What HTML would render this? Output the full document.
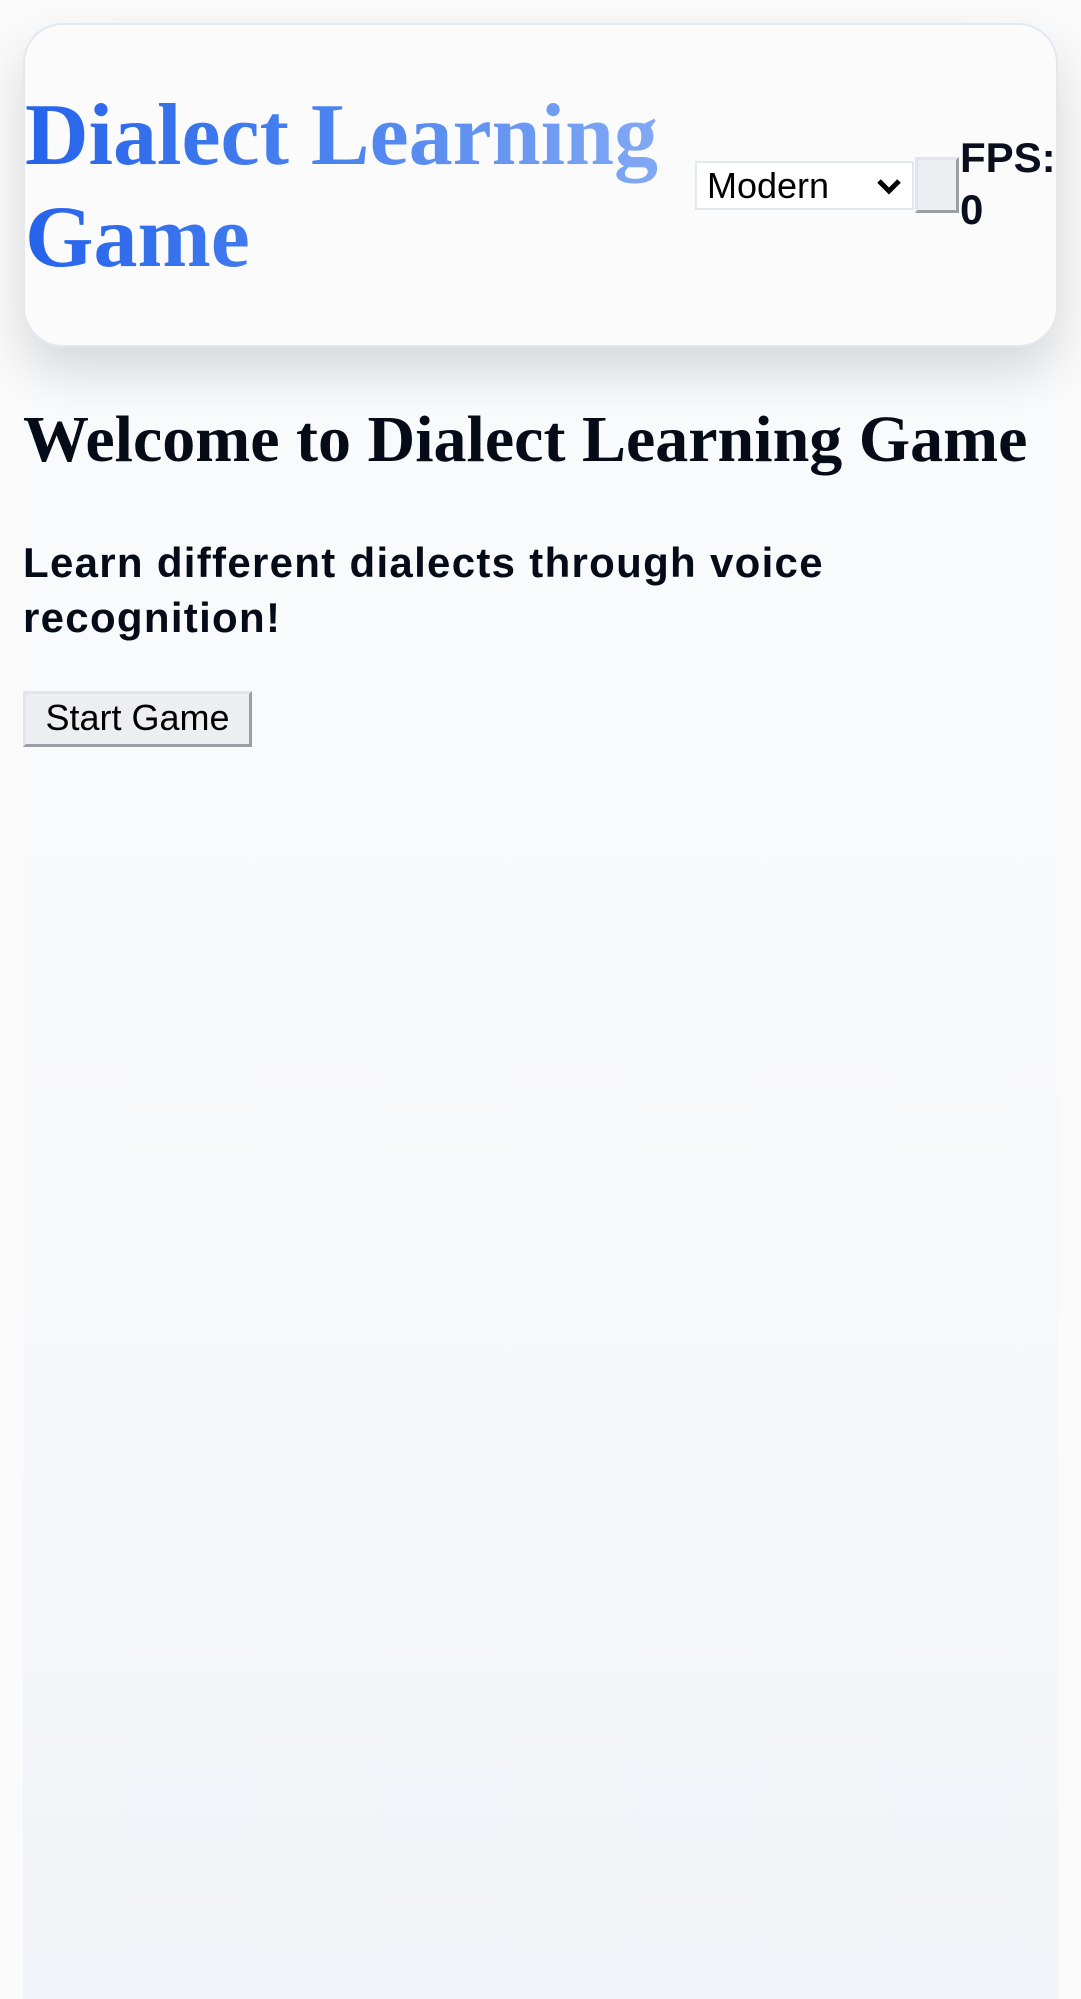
<!DOCTYPE html>
<html><head><meta charset="utf-8"><style>
html,body{margin:0;padding:0;}
body{width:1081px;height:1999px;background:#fafafb;position:relative;overflow:hidden;font-family:"Liberation Sans",Arial,sans-serif;}
.col{position:absolute;left:23px;top:23px;width:1035px;height:1976px;background:linear-gradient(180deg,#fafbfc 0%,#f8f9fb 50%,#f1f4f8 100%);}
.hdr{position:absolute;left:23px;top:23px;width:1031px;height:320px;border:2px solid #e3e7ee;border-radius:40px;background:#fbfbfc;box-shadow:0 25px 50px rgba(0,0,0,0.14);}
.title{position:absolute;left:25px;top:85px;margin:0;font-family:"Liberation Serif",serif;font-weight:bold;font-size:88px;line-height:102px;background:linear-gradient(90deg,#2563eb 0%,#4f86ef 50%,#8aaef5 100%);-webkit-background-clip:text;background-clip:text;color:transparent;width:680px;}
.sel{position:absolute;left:695px;top:161px;width:219px;height:49px;box-sizing:border-box;border:2px solid #e3e7ee;background:#fff;font-size:36px;padding-left:10px;line-height:45px;}
.sel svg{position:absolute;right:10px;top:15px;}
.btn2{position:absolute;left:915px;top:157px;width:44px;height:56px;box-sizing:border-box;background:#eceef1;border:3px solid #e2e6ec;border-right-color:#9a9ea5;border-bottom-color:#9a9ea5;}
.fps{position:absolute;left:960px;top:132px;font-weight:bold;font-size:42px;line-height:52px;color:#0a0f1e;}
h2{position:absolute;left:23px;top:400px;margin:0;font-family:"Liberation Serif",serif;font-size:66px;line-height:80px;color:#060b18;white-space:nowrap;}
h3{position:absolute;left:23px;top:535px;margin:0;font-size:42px;letter-spacing:1.3px;line-height:55px;width:880px;color:#060b18;}
.start{position:absolute;left:23px;top:691px;width:229px;height:56px;box-sizing:border-box;background:#eceef1;border:3px solid #e2e6ec;border-right-color:#9a9ea5;border-bottom-color:#9a9ea5;font-size:36px;text-align:center;line-height:48px;color:#000;}
</style></head><body>
<div class="col"></div>
<div class="hdr"></div>
<h1 class="title">Dialect Learning Game</h1>
<div class="sel">Modern<svg width="26" height="18" viewBox="0 0 26 18"><path d="M3 3 L13 13 L23 3" fill="none" stroke="#000" stroke-width="5"/></svg></div>
<div class="btn2"></div>
<div class="fps">FPS:<br>0</div>
<h2>Welcome to Dialect Learning Game</h2>
<h3>Learn different dialects through voice recognition!</h3>
<div class="start">Start Game</div>
</body></html>
